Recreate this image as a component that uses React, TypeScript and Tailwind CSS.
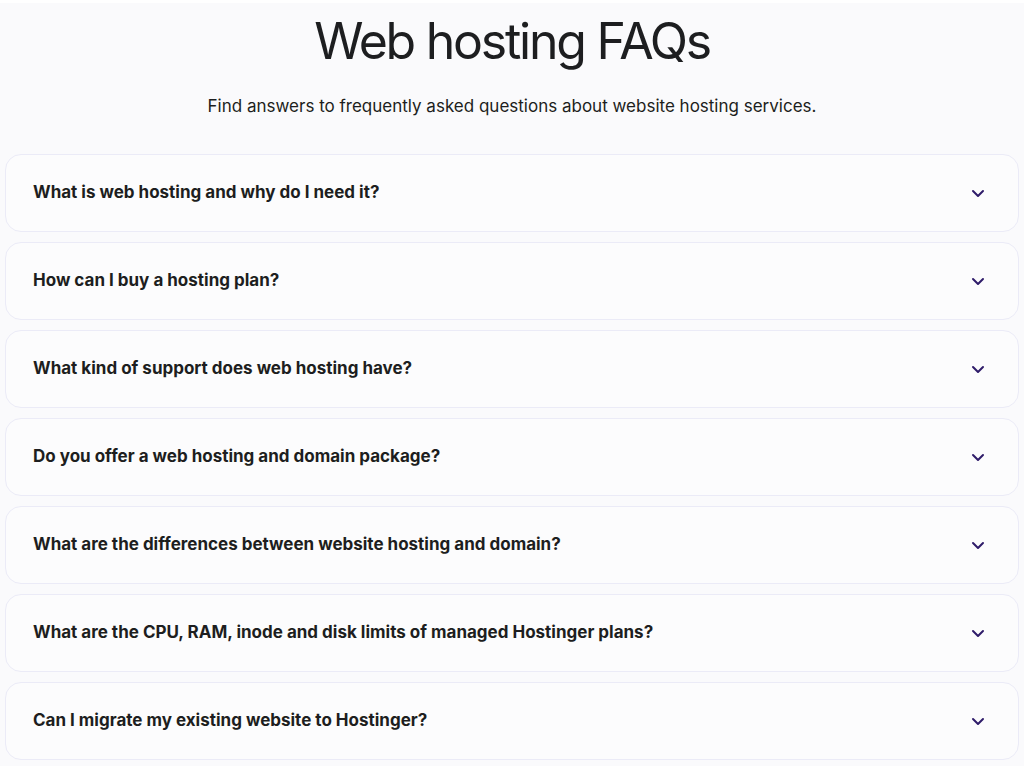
import React, { useState } from 'react';

const faqs: string[] = [
    'What is web hosting and why do I need it?',
    'How can I buy a hosting plan?',
    'What kind of support does web hosting have?',
    'Do you offer a web hosting and domain package?',
    'What are the differences between website hosting and domain?',
    'What are the CPU, RAM, inode and disk limits of managed Hostinger plans?',
    'Can I migrate my existing website to Hostinger?',
];

const Chevron: React.FC<{ open: boolean }> = ({ open }) => (
    <svg
        className={`w-4 h-4 text-[#2f1c6a] transition-transform ${open ? 'rotate-180' : ''}`}
        viewBox="0 0 16 16"
        fill="none"
        stroke="currentColor"
    >
        <path d="M3 6l5 5 5-5" strokeWidth={2} strokeLinecap="round" strokeLinejoin="round" />
    </svg>
);

const App: React.FC = () => {
    const [openIndex, setOpenIndex] = useState<number | null>(null);

    return (
        <div className="min-h-screen bg-[#fafafc] border-t-[3px] border-white font-['Inter','Noto_Sans',sans-serif] text-[#1d1e20]">
            <section className="flex flex-col items-center px-[5px]">
                <h1 className="mt-[10px] text-[50px] leading-[56px] font-normal tracking-[-0.045em]">Web hosting FAQs</h1>
                <p className="mt-[25px] text-[17px] leading-[24px]">
                    Find answers to frequently asked questions about website hosting services.
                </p>
                <div className="mt-[36px] w-full flex flex-col gap-[10px]">
                    {faqs.map((q, i) => (
                        <button
                            key={q}
                            onClick={() => setOpenIndex(openIndex === i ? null : i)}
                            className="w-full h-[78px] flex items-center justify-between pl-[27px] pr-[32px] rounded-[16px] border border-[#ebebf7] bg-[#fcfcfd] text-left"
                        >
                            <span className="text-[17px] font-bold">{q}</span>
                            <Chevron open={openIndex === i} />
                        </button>
                    ))}
                </div>
            </section>
        </div>
    );
};

export default App;
